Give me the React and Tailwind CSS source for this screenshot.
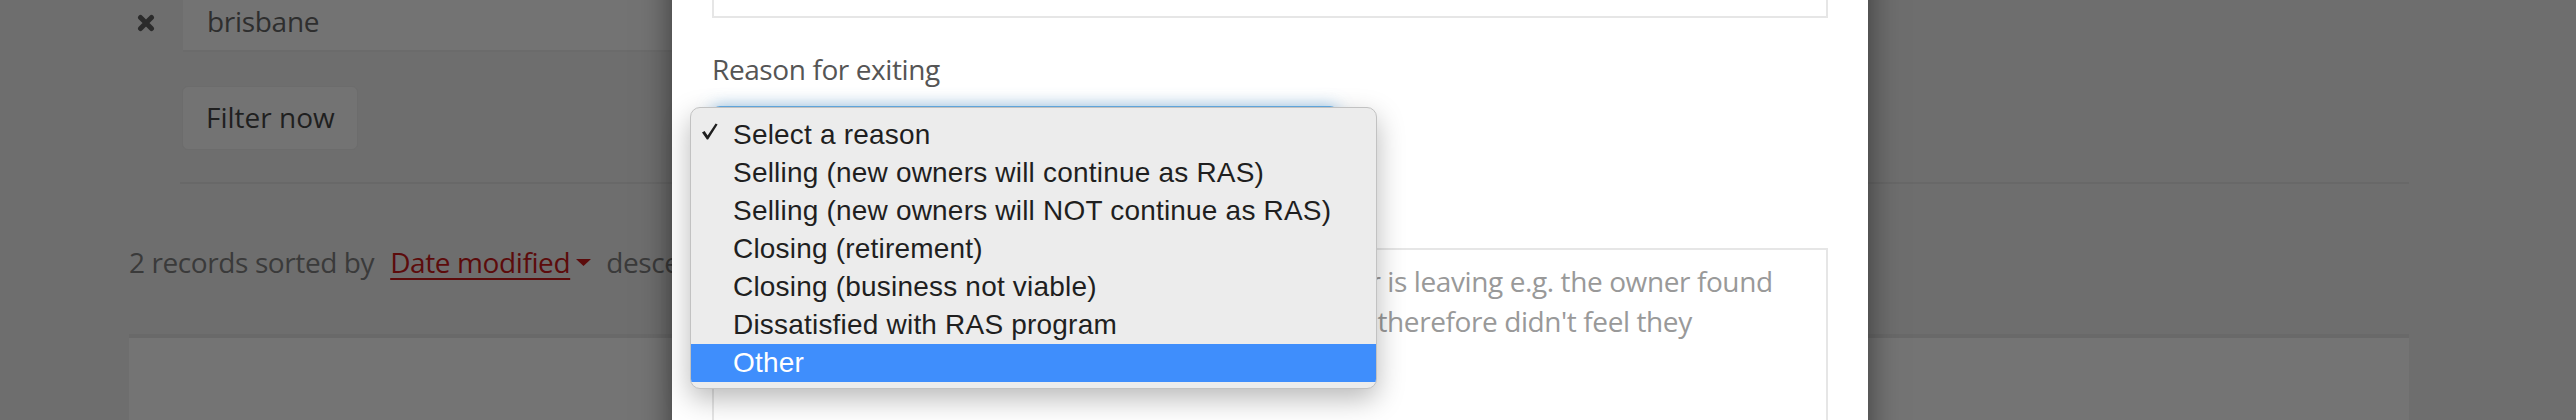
import React from "react";

const options = [
  "Select a reason",
  "Selling (new owners will continue as RAS)",
  "Selling (new owners will NOT continue as RAS)",
  "Closing (retirement)",
  "Closing (business not viable)",
  "Dissatisfied with RAS program",
  "Other",
];

function Page() {
  return (
    <div className="ml-[129px] w-[2280px] text-[28px] leading-[40px]">
      {/* filter form */}
      <div className="pl-[51px]">
        <div className="flex -mt-[16px] -ml-[43px]">
          <div className="w-[46px] pt-[30px]">
            <svg width="18" height="18" viewBox="0 0 18 18" className="block">
              <path d="M3.5 3.5 L14.5 14.5 M14.5 3.5 L3.5 14.5" stroke="#2b2b2b" strokeWidth="5" strokeLinecap="round" />
            </svg>
          </div>
          <div className="w-[1100px] h-[68px] bg-[#737373] border-b-2 border-[#6b6b6b] pl-[24px] pt-[17px] text-[#2e2e2e] tracking-[-0.3px]">
            brisbane
          </div>
        </div>
        <div className="mt-[34px] ml-[2px] w-[176px] h-[64px] rounded-[6px] bg-[#737373] border border-[#6c6c6c] pl-[23px] pt-[10px] text-[#1f1f1f]">
          Filter now
        </div>
        <div className="mt-[32px] h-[2px] bg-[#686868]" />
      </div>
      {/* records line */}
      <div className="mt-[58px] flex items-baseline text-[#3a3a3a] whitespace-nowrap tracking-[-0.4px]">
        <span>2 records sorted by</span>
        <span className="ml-[16px] text-[#5c0b0b] underline decoration-2 underline-offset-[5px]">Date modified</span>
        <svg width="15" height="7" viewBox="0 0 15 7" className="ml-[6px] self-center">
          <path d="M0 0 L15 0 L7.5 7 Z" fill="#5c0b0b" />
        </svg>
        <span className="ml-[15px]">descending</span>
      </div>
      {/* card */}
      <div className="mt-[52px] border-t-4 border-[#696969] bg-[#747474] h-[200px]" />
    </div>
  );
}

function Modal() {
  return (
    <div className="absolute left-[672px] top-[-200px] w-[1196px] h-[900px] bg-white shadow-[0_10px_30px_rgba(0,0,0,0.5)] px-[40px] pt-[150px] text-[28px] leading-[40px] tracking-[-0.4px]">
      {/* date input */}
      <div className="h-[68px] border-2 border-[#e6e6e6] pl-[24px] pt-[1px] text-[#555]">
        <div className="-mt-[2px]">dd/mm/yyyy</div>
      </div>
      <div className="mt-[31px] text-[#555]">Reason for exiting</div>
      <div className="mt-[17px] w-[626px] h-[68px] rounded-[8px] border-2 border-[#66afe9] shadow-[0_0_16px_rgba(102,175,233,0.6)]" />
      <div className="mt-[74px] h-[400px] border-2 border-[#e6e6e6] pl-[24px] pt-[11px] text-[#999] whitespace-nowrap">
        <div>Please provide more detail about why the member is leaving e.g. the owner found</div>
        <div>a far better deal through another loyalty program, therefore didn't feel they</div>
      </div>
    </div>
  );
}

function Menu() {
  return (
    <div
      className="absolute left-[690px] top-[107px] w-[687px] h-[282px] rounded-[10px] bg-[#ececec] border border-[#c2c2c2] shadow-[0_10px_28px_rgba(0,0,0,0.28)] pt-[8px] text-[28px] leading-[34px] tracking-[0.2px] text-[#1f1f1f] overflow-hidden"
      style={{ fontFamily: "'Liberation Sans', Arial, sans-serif" }}
    >
      {options.map((o, i) => (
        <div
          key={o}
          className={
            "flex h-[38px] whitespace-nowrap " +
            (o === "Other" ? "bg-[#3f8efc] text-white" : "")
          }
        >
          <div className="w-[42px] pl-[9px] pt-[6px]">
            {i === 0 ? (
              <svg width="19" height="19" viewBox="0 0 19 19" className="block">
                <path d="M2 10.5 L4.6 9 L7.6 13.6 L15.6 1.4 L17.6 2.6 L8.1 17.6 L6.9 17.6 Z" fill="#1f1f1f" />
              </svg>
            ) : null}
          </div>
          <div className="pt-[2px]">{o}</div>
        </div>
      ))}
    </div>
  );
}

export default function App() {
  return (
    <div
      className="relative w-[2576px] h-[420px] overflow-hidden bg-[#6e6e6e]"
      style={{ fontFamily: "'Open Sans', 'Liberation Sans', sans-serif" }}
    >
      <Page />
      <Modal />
      <Menu />
    </div>
  );
}
